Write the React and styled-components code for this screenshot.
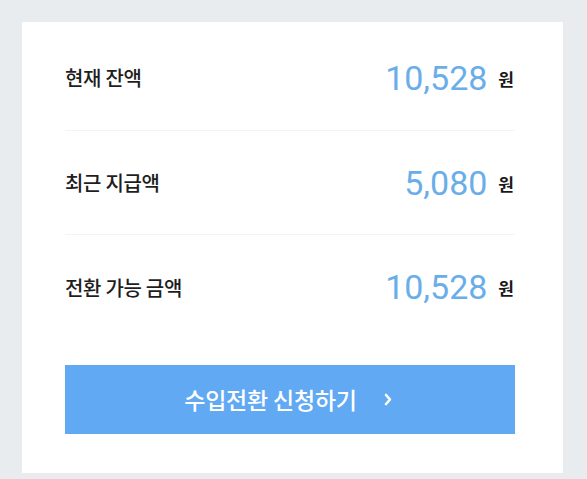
import React from "react";
import styled, { createGlobalStyle } from "styled-components";

const GlobalStyle = createGlobalStyle`
  html, body {
    margin: 0;
    padding: 0;
    background: #e9ecef;
  }
  body {
    font-family: "Noto Sans CJK KR", "Noto Sans", sans-serif;
  }
`;

const Page = styled.div`
  padding: 22px 24px 6px 22px;
  min-height: 479px;
  box-sizing: border-box;
`;

const Card = styled.div`
  background: #fff;
  padding: 4px 48px 39px 43px;
  height: 451px;
  box-sizing: border-box;
  display: flex;
  flex-direction: column;
`;

const Row = styled.div`
  display: flex;
  align-items: center;
  justify-content: space-between;
  height: 104px;
  border-bottom: ${(p) => (p.$last ? "none" : "1px solid #f2f3f5")};
`;

const Label = styled.span`
  font-size: 20px;
  font-weight: 500;
  color: #1e1e1e;
  letter-spacing: -0.3px;
`;

const Amount = styled.span`
  display: flex;
  align-items: center;
  gap: 11px;
`;

const Number = styled.span`
  font-family: Roboto, "Noto Sans", sans-serif;
  font-size: 34px;
  color: #6aaee9;
`;

const Unit = styled.span`
  font-size: 17px;
  font-weight: 700;
  color: #1a1a1a;
  margin-right: 1px;
  margin-top: 1px;
`;

const Button = styled.button`
  margin-top: 26px;
  height: 69px;
  width: 100%;
  border: none;
  background: #62a9f3;
  color: #fff;
  display: flex;
  align-items: center;
  justify-content: center;
  gap: 27px;
  font-family: "Noto Sans CJK KR", "Noto Sans", sans-serif;
  font-size: 23px;
  font-weight: 500;
  letter-spacing: -0.2px;
  cursor: pointer;
  padding: 0 4px 2px 0;
`;

const Chevron = styled.svg`
  width: 8px;
  height: 13px;
  margin-top: 2px;
`;

const rows = [
  { label: "현재 잔액", value: "10,528" },
  { label: "최근 지급액", value: "5,080" },
  { label: "전환 가능 금액", value: "10,528" },
];

export default function App() {
  return (
    <>
      <GlobalStyle />
      <Page>
        <Card>
          {rows.map((r, i) => (
            <Row key={r.label} $last={i === rows.length - 1}>
              <Label>{r.label}</Label>
              <Amount>
                <Number>{r.value}</Number>
                <Unit>원</Unit>
              </Amount>
            </Row>
          ))}
          <Button>
            <span>수입전환 신청하기</span>
            <Chevron viewBox="0 0 8 13">
              <path
                d="M2 2 L6 6.5 L2 11"
                fill="none"
                stroke="#fff"
                strokeWidth="2.6"
                strokeLinecap="round"
                strokeLinejoin="round"
              />
            </Chevron>
          </Button>
        </Card>
      </Page>
    </>
  );
}
